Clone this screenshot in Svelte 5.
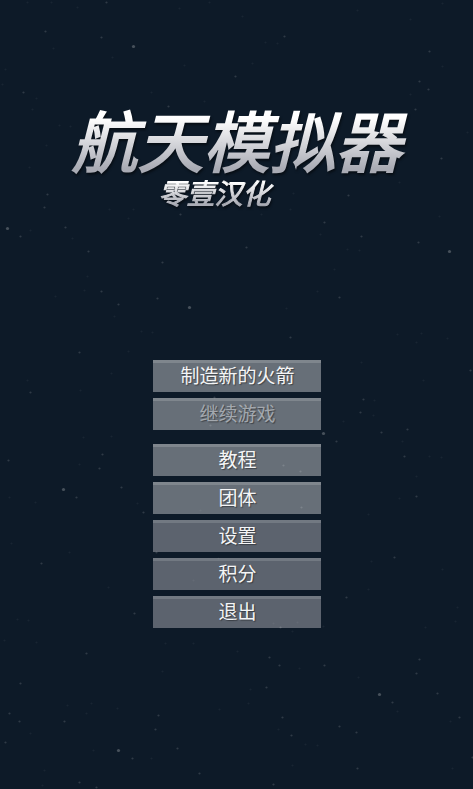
<script lang="ts">
  interface MenuItem {
    label: string;
    disabled?: boolean;
    dark?: boolean;
  }

  const groups: MenuItem[][] = [
    [{ label: "制造新的火箭" }, { label: "继续游戏", disabled: true }],
    [
      { label: "教程" },
      { label: "团体" },
      { label: "设置", dark: true },
      { label: "积分", dark: true },
      { label: "退出", dark: true },
    ],
  ];

  // x, y of each star, brightest first
  const bright = [
    [133, 46], [7, 228], [449, 251], [189, 307], [63, 489], [323, 433],
    [118, 750], [379, 694],
  ];
  const medium = [
    [45, 31], [101, 37], [23, 92], [235, 76], [284, 36], [429, 51], [419, 81],
    [428, 89], [47, 194], [44, 207], [65, 227], [20, 236], [88, 251],
    [180, 214], [361, 236], [418, 242], [246, 247], [324, 222], [441, 158],
    [415, 109], [348, 195], [339, 297], [101, 291], [157, 298], [162, 262],
    [118, 304], [79, 352], [30, 392], [102, 454], [99, 468], [121, 487],
    [76, 497], [8, 460], [143, 512], [290, 337], [363, 399], [360, 412],
    [381, 432], [336, 441], [404, 456], [407, 429], [470, 370], [214, 397],
    [210, 425], [283, 465], [300, 471], [301, 507], [41, 563], [134, 613],
    [86, 653], [20, 683], [9, 713], [19, 721], [64, 721], [5, 742],
    [132, 758], [79, 782], [96, 787], [158, 715], [155, 729], [177, 748],
    [199, 773], [394, 557], [346, 597], [280, 627], [269, 657], [279, 665],
    [324, 665], [419, 659], [416, 673], [437, 693], [392, 702], [459, 717],
    [339, 726], [356, 732], [291, 735], [282, 717], [357, 768], [273, 784],
    [266, 687], [472, 757], [156, 552], [106, 2], [168, 106], [416, 496],
  ];
  const faint = [
    [53, 48], [112, 57], [36, 98], [32, 109], [27, 2], [51, 2], [77, 7],
    [179, 8], [209, 2], [242, 16], [410, 19], [357, 10], [442, 3], [265, 42],
    [277, 43], [252, 63], [184, 65], [151, 92], [5, 69], [2, 84], [204, 101],
    [410, 94], [442, 66], [59, 125], [70, 126], [46, 145], [29, 167],
    [109, 209], [128, 218], [133, 209], [30, 230], [72, 238], [293, 193],
    [290, 209], [261, 214], [439, 216], [320, 234], [347, 249], [359, 250],
    [399, 182], [467, 132], [334, 269], [317, 291], [286, 308], [397, 334],
    [421, 333], [447, 338], [416, 342], [361, 362], [423, 380], [55, 296],
    [84, 290], [87, 276], [114, 316], [141, 331], [152, 332], [128, 351],
    [111, 373], [27, 380], [80, 390], [83, 437], [111, 436], [79, 464],
    [35, 502], [9, 497], [137, 503], [374, 400], [373, 415], [343, 421],
    [402, 441], [429, 456], [441, 457], [416, 476], [399, 498], [368, 514],
    [11, 543], [69, 552], [108, 587], [17, 619], [28, 620], [4, 640],
    [36, 642], [165, 643], [193, 643], [162, 671], [67, 705], [91, 703],
    [86, 713], [117, 708], [30, 733], [93, 750], [151, 758], [44, 770],
    [42, 785], [219, 709], [237, 651], [371, 561], [368, 589], [442, 569],
    [457, 607], [455, 621], [425, 627], [323, 626], [292, 631], [299, 668],
    [358, 677], [250, 689], [248, 703], [397, 711], [450, 721], [278, 729],
    [305, 744], [317, 745], [292, 765], [452, 768], [218, 558], [200, 510],
    [193, 580], [273, 623], [297, 622],
  ];
</script>

<main>
  <header>
    <h1>航天模拟器</h1>
    <p>零壹汉化</p>
  </header>

  <nav>
    {#each groups as group}
      <div class="group">
        {#each group as item}
          <button type="button" class:dark={item.dark} disabled={item.disabled}>
            {item.label}
          </button>
        {/each}
      </div>
    {/each}
  </nav>

  <svg
    class="stars"
    viewBox="0 0 473 789"
    preserveAspectRatio="xMidYMid slice"
    aria-hidden="true"
  >
    {#each bright as [x, y]}
      <circle class="bright" cx={x + 0.5} cy={y + 0.5} r="1.6" />
    {/each}
    {#each medium as [x, y]}
      <circle class="medium" cx={x + 0.5} cy={y + 0.5} r="1.1" />
    {/each}
    {#each faint as [x, y]}
      <circle class="faint" cx={x + 0.5} cy={y + 0.5} r="1.1" />
    {/each}
  </svg>
</main>

<style>
  :global(body) {
    margin: 0;
    background-color: #0d1a28;
  }

  main {
    position: relative;
    display: flex;
    flex-direction: column;
    align-items: center;
    box-sizing: border-box;
    min-height: 100vh;
    padding: 104px 0 40px;
    font-family: "Noto Sans CJK SC", sans-serif;
    background-color: #0d1a28;
    overflow: hidden;
  }

  .stars {
    position: absolute;
    top: 0;
    left: 0;
    width: 100%;
    height: 100%;
    fill: #ffffff;
    pointer-events: none;
  }

  .bright {
    opacity: 0.24;
  }

  .medium {
    opacity: 0.14;
  }

  .faint {
    opacity: 0.05;
  }

  header {
    display: flex;
    flex-direction: column;
    align-items: center;
    filter: drop-shadow(1px 2px 1px rgba(0, 0, 0, 0.5));
  }

  h1,
  p {
    margin: 0;
    padding: 0 12px;
    font-style: italic;
    font-weight: 400;
    white-space: nowrap;
    color: transparent;
    background-image: linear-gradient(#ffffff 20%, #a9abb4 90%);
    -webkit-background-clip: text;
    background-clip: text;
  }

  h1 {
    padding-bottom: 4px;
    font-size: 66px;
    line-height: 68px;
    -webkit-text-stroke: 2px transparent;
  }

  p {
    margin-right: 44px;
    font-size: 28px;
    line-height: 32px;
    -webkit-text-stroke: 1px transparent;
  }

  nav {
    display: flex;
    flex-direction: column;
    gap: 14px;
    width: 168px;
    margin-top: 152px;
  }

  .group {
    display: flex;
    flex-direction: column;
    gap: 6px;
  }

  button {
    height: 32px;
    padding: 0 0 6px 2px;
    border: 0;
    border-top: 3px solid #7f868d;
    font-family: inherit;
    font-size: 19px;
    line-height: 22px;
    color: #f4f5f6;
    text-shadow: 1px 1px 1px rgba(0, 0, 0, 0.4);
    background-color: #676f78;
    cursor: pointer;
  }

  button.dark {
    border-top-color: #727982;
    background-color: #5c636e;
  }

  button:disabled {
    color: #a3a8ae;
    cursor: default;
  }
</style>
